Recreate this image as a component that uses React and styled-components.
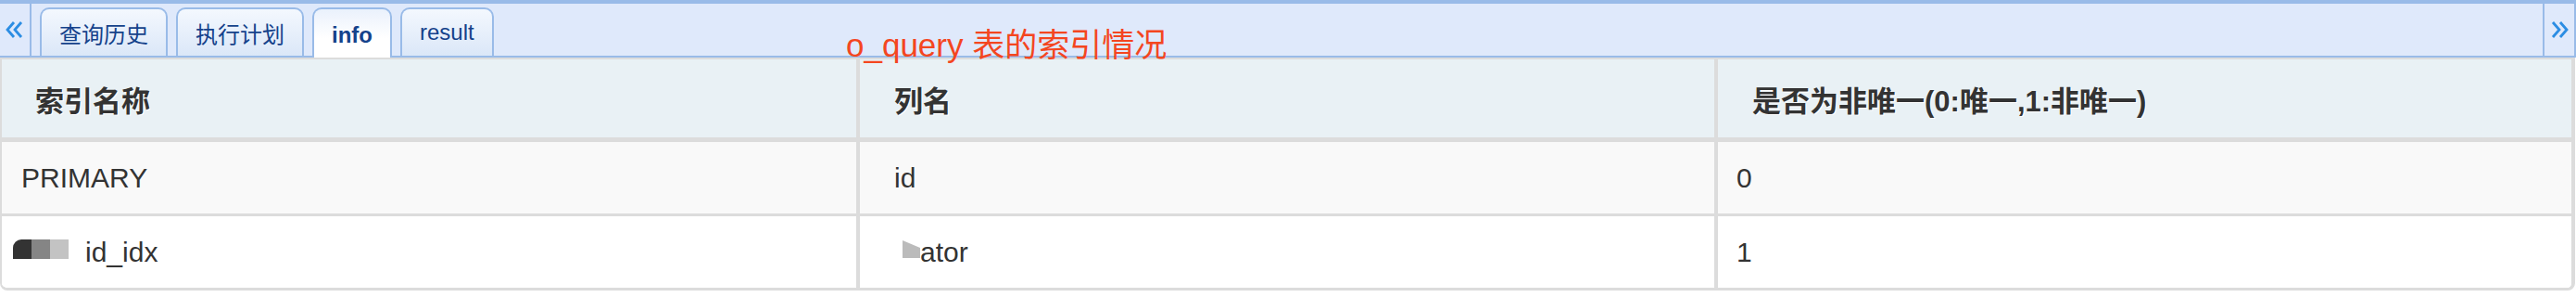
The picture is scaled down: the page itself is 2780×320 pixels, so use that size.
import styled, { createGlobalStyle, css } from "styled-components";

const GlobalStyle = createGlobalStyle`
  html, body {
    margin: 0;
    padding: 0;
    background: #fff;
  }
  body {
    font-family: "Liberation Sans", "Noto Sans CJK SC", Arial, sans-serif;
    color: #333;
  }
  * {
    box-sizing: border-box;
  }
`;

const Page = styled.div`
  position: relative;
  width: 2780px;
  height: 320px;
  overflow: hidden;
`;

/* Tab strip */
const TabBar = styled.div`
  display: flex;
  height: 62px;
  background-color: #dfe9fb;
  border-top: 4px solid #99bbe8;
  border-right: 2px solid #99bbe8;
  border-bottom: 2px solid #99bbe8;
`;

const Scroller = styled.div`
  width: 34px;
  flex: none;
  display: flex;
  align-items: center;
  justify-content: center;
  ${(props) =>
    props.side === "left"
      ? css`
          border-right: 2px solid #99bbe8;
        `
      : css`
          border-left: 2px solid #99bbe8;
        `}

  & svg {
    width: 20px;
    height: 18px;
  }
`;

const TabStrip = styled.div`
  flex: 1;
  display: flex;
  align-items: flex-end;
  gap: 9px;
  padding-left: 9px;
`;

const Tab = styled.div`
  height: 52px;
  display: flex;
  align-items: center;
  padding: 0 19px;
  border: 2px solid #99bbe8;
  border-bottom: none;
  border-radius: 10px 10px 0 0;
  background: linear-gradient(#f4f8fe, #dbe7f8);
  color: #15428b;
  font-size: 24px;
  font-family: "Liberation Sans", "Noto Sans CJK SC", sans-serif;
  white-space: nowrap;

  ${(props) =>
    props.active &&
    css`
      height: 54px;
      margin-bottom: -2px;
      position: relative;
      z-index: 1;
      padding-top: 4px;
      font-weight: bold;
      background: linear-gradient(#eaf1fc, #ffffff 60%);
    `}
`;

/* Grid */
const Table = styled.div`
  width: 2779px;
  border: 2px solid #dcdcdc;
  border-right-width: 4px;
  border-bottom-width: 3px;
  border-radius: 0 0 8px 8px;
  overflow: hidden;
`;

const Row = styled.div`
  display: grid;
  grid-template-columns: 922px 926px 1fr;
  height: ${(props) => (props.header ? "89px" : props.last ? "77px" : "80px")};
  background-color: ${(props) => props.bg};
  border-bottom: ${(props) =>
    props.header ? "5px solid #dcdcdc" : props.last ? "none" : "3px solid #dcdcdc"};
`;

const Cell = styled.div`
  display: flex;
  align-items: center;
  padding-left: ${(props) => props.pad}px;
  font-size: 30px;
  color: #333;
  white-space: nowrap;

  & + & {
    border-left: 4px solid #dcdcdc;
  }
`;

const HeadCell = styled(Cell)`
  font-size: 31px;
  font-weight: bold;
  text-shadow: 1px 1px 0 #fff;
`;

const Mosaic = styled.span`
  display: inline-flex;
  margin-left: -9px;
  margin-right: 18px;
  height: 21px;
  margin-top: -6px;
`;

const Block = styled.span`
  width: 20px;
  height: 100%;
  background-color: ${(props) => props.color};
  border-top-left-radius: ${(props) => (props.round ? "9px" : "0")};
`;

const Wedge = styled.span`
  width: 19px;
  height: 19px;
  margin-left: 9px;
  margin-top: -6px;
  background-color: #bbbbbb;
  clip-path: polygon(0 0, 100% 42%, 100% 100%, 0 100%);
`;

const Note = styled.div`
  position: absolute;
  left: 913px;
  top: 31px;
  font-size: 35px;
  line-height: 1;
  color: #f4461f;
  font-family: "Liberation Sans", "Noto Sans CJK SC", sans-serif;
  white-space: nowrap;
  z-index: 2;
`;

function Chevrons({ dir }) {
  const pts =
    dir === "left"
      ? ["9,1 2,9 9,17", "17,1 10,9 17,17"]
      : ["3,1 10,9 3,17", "11,1 18,9 11,17"];
  return (
    <svg viewBox="0 0 20 18" fill="none" stroke="#2b8de3" strokeWidth="2.8" strokeLinejoin="miter">
      {pts.map((p) => (
        <polyline key={p} points={p} />
      ))}
    </svg>
  );
}

const tabs = [
  { label: "查询历史" },
  { label: "执行计划" },
  { label: "info", active: true },
  { label: "result" },
];

export default function App() {
  return (
    <Page>
      <GlobalStyle />
      <TabBar>
        <Scroller side="left">
          <Chevrons dir="left" />
        </Scroller>
        <TabStrip>
          {tabs.map((t) => (
            <Tab key={t.label} active={t.active}>
              {t.label}
            </Tab>
          ))}
        </TabStrip>
        <Scroller side="right">
          <Chevrons dir="right" />
        </Scroller>
      </TabBar>

      <Table>
        <Row header bg="#e9f1f5">
          <HeadCell pad={36}>索引名称</HeadCell>
          <HeadCell pad={37}>列名</HeadCell>
          <HeadCell pad={37}>是否为非唯一(0:唯一,1:非唯一)</HeadCell>
        </Row>
        <Row bg="#f9f9f9">
          <Cell pad={21}>PRIMARY</Cell>
          <Cell pad={37}>id</Cell>
          <Cell pad={20}>0</Cell>
        </Row>
        <Row last bg="#ffffff">
          <Cell pad={21}>
            <Mosaic>
              <Block round color="#333333" />
              <Block color="#858585" />
              <Block color="#c3c3c3" />
            </Mosaic>
            id_idx
          </Cell>
          <Cell pad={37}>
            <Wedge />
            ator
          </Cell>
          <Cell pad={20}>1</Cell>
        </Row>
      </Table>

      <Note>o_query 表的索引情况</Note>
    </Page>
  );
}
